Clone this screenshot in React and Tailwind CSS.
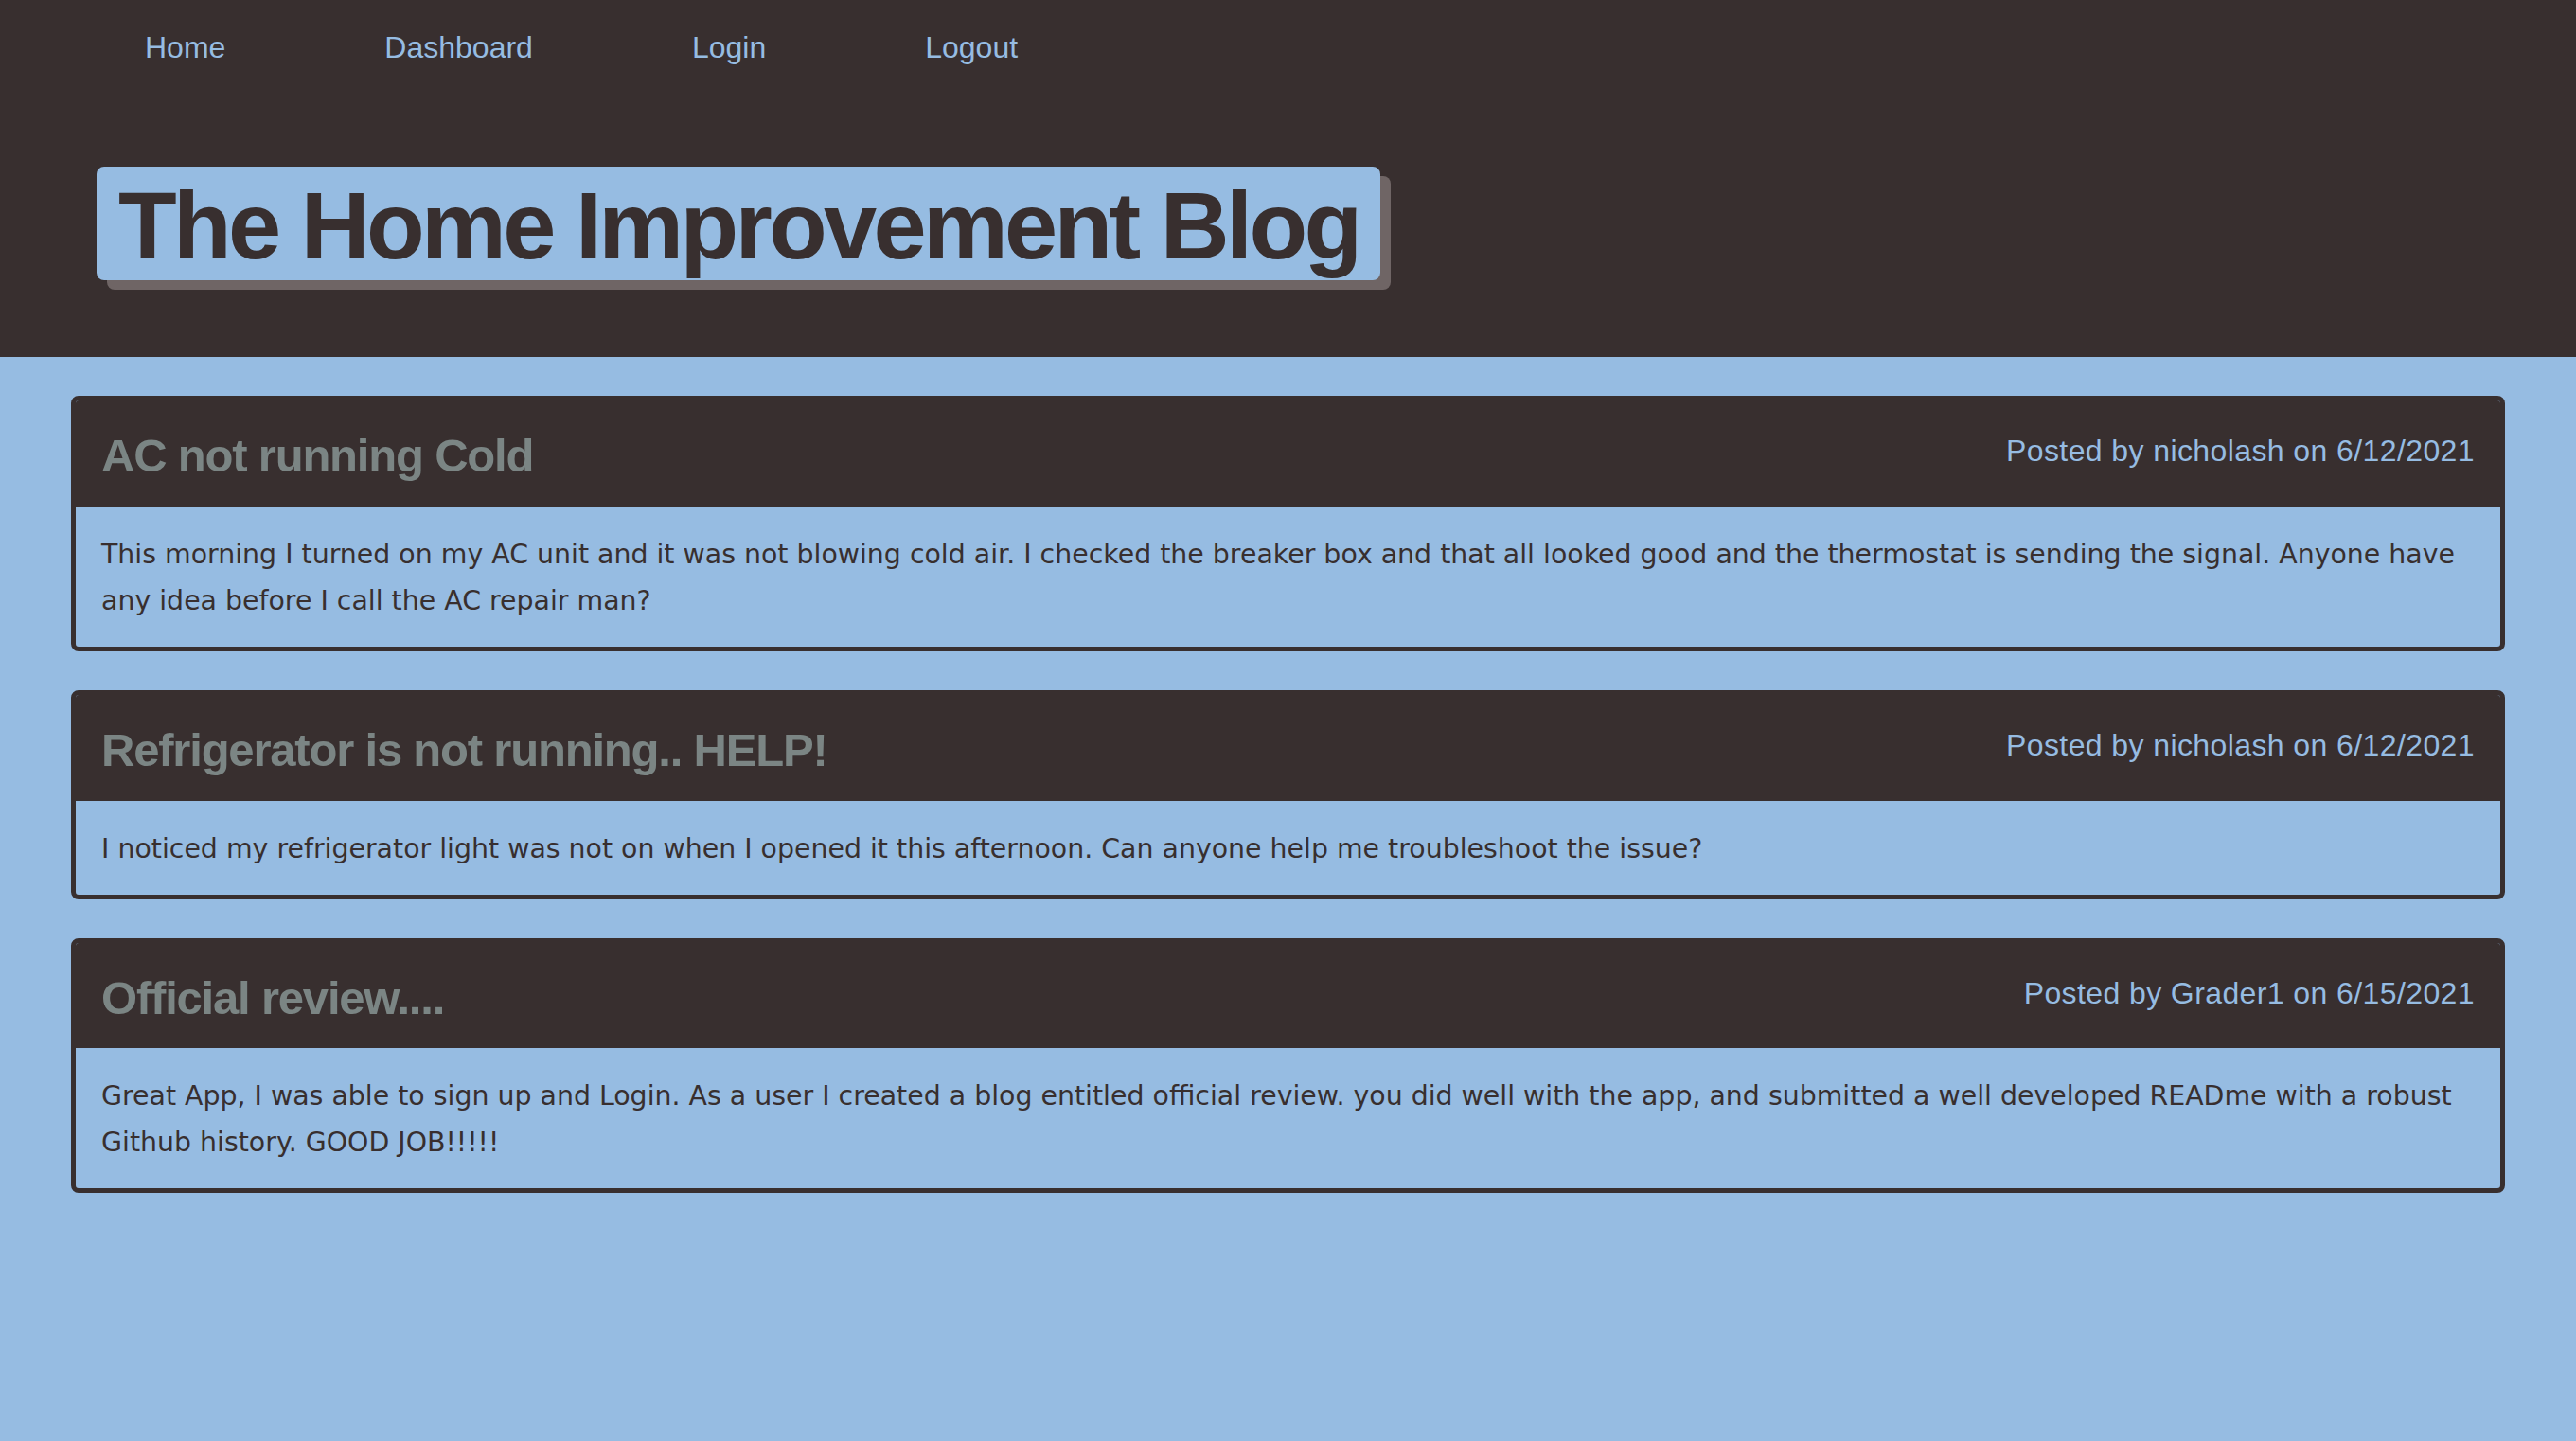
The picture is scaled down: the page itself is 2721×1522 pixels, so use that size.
import React from "react";

const posts = [
  {
    title: "AC not running Cold",
    author: "nicholash",
    date: "6/12/2021",
    body: "This morning I turned on my AC unit and it was not blowing cold air. I checked the breaker box and that all looked good and the thermostat is sending the signal. Anyone have any idea before I call the AC repair man?",
  },
  {
    title: "Refrigerator is not running.. HELP!",
    author: "nicholash",
    date: "6/12/2021",
    body: "I noticed my refrigerator light was not on when I opened it this afternoon. Can anyone help me troubleshoot the issue?",
  },
  {
    title: "Official review....",
    author: "Grader1",
    date: "6/15/2021",
    body: "Great App, I was able to sign up and Login. As a user I created a blog entitled official review. you did well with the app, and submitted a well developed READme with a robust Github history. GOOD JOB!!!!!",
  },
];

function PostCard({ post }) {
  return (
    <div className="border-[5px] border-[#382f2f] rounded-lg overflow-hidden">
      <div className="bg-[#382f2f] flex items-start justify-between px-[27px] pt-[29px] pb-[24px]">
        <h2 className="text-[49px] leading-[1.2] font-bold tracking-[-1.2px] text-[#7b8584]">{post.title}</h2>
        <p className="text-[32px] leading-[1.5] tracking-[0.4px] text-[#96bce2]">
          Posted by {post.author} on {post.date}
        </p>
      </div>
      <div className="px-[27px] pt-[26px] pb-[24px]">
        <p className="font-['DejaVu_Sans',sans-serif] text-[28.4px] leading-[49px] text-[#382f2f]">{post.body}</p>
      </div>
    </div>
  );
}

export default function App() {
  return (
    <div className="min-h-screen bg-[#96bce2] font-['Liberation_Sans',sans-serif]">
      <header className="bg-[#382f2f] h-[377px] pt-[27px]">
        <nav className="flex items-center gap-[168px] pl-[153px]">
          <a href="#" className="text-[32px] leading-[47px] text-[#96bce2]">Home</a>
          <a href="#" className="text-[32px] leading-[47px] text-[#96bce2]">Dashboard</a>
          <a href="#" className="text-[32px] leading-[47px] text-[#96bce2]">Login</a>
          <a href="#" className="text-[32px] leading-[47px] text-[#96bce2]">Logout</a>
        </nav>
        <div className="pl-[102px] mt-[102px]">
          <h1 className="inline-block bg-[#96bce2] rounded-lg px-[23px] pt-[4px] text-[101px] leading-[1.15] font-bold tracking-[-3.7px] text-[#382f2f] shadow-[11px_10px_0_#6f6565]">
            The Home Improvement Blog
          </h1>
        </div>
      </header>
      <main className="flex flex-col gap-[41px] px-[75px] pt-[41px] pb-[60px]">
        {posts.map((post) => (
          <PostCard key={post.title} post={post} />
        ))}
      </main>
    </div>
  );
}
